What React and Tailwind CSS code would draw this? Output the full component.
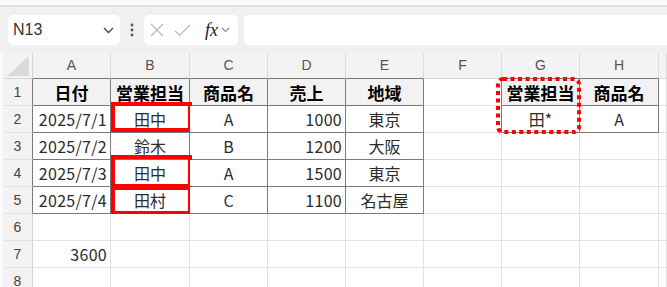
import React from 'react';

// columns: row header + A..H + partial I
const COLS = ['A', 'B', 'C', 'D', 'E', 'F', 'G', 'H', ''];

const ROWS = [
  ['日付', '営業担当', '商品名', '売上', '地域', '', '営業担当', '商品名', ''],
  ['2025/7/1', '田中', 'A', '1000', '東京', '', '田*', 'A', ''],
  ['2025/7/2', '鈴木', 'B', '1200', '大阪', '', '', '', ''],
  ['2025/7/3', '田中', 'A', '1500', '東京', '', '', '', ''],
  ['2025/7/4', '田村', 'C', '1100', '名古屋', '', '', '', ''],
  ['', '', '', '', '', '', '', '', ''],
  ['3600', '', '', '', '', '', '', '', ''],
  ['', '', '', '', '', '', '', '', ''],
];

// right aligned numbers / dates
const RIGHT = new Set(['2025/7/1', '2025/7/2', '2025/7/3', '2025/7/4', '1000', '1200', '1500', '1100', '3600']);

// red highlight frames (row index 1-based, col index 0-based)
const FRAMES = {
  '2-1': 'left-0 -right-[3px] -top-[4px] bottom-0',
  '4-1': 'left-0 -right-[3px] -top-[5px] -bottom-[2px]',
  '5-1': 'left-0 -right-[3px] -top-[1px] -bottom-[2px]',
};

function inTable(r, c) {
  if (r >= 1 && r <= 5 && c >= 0 && c <= 4) return true;
  if (r >= 1 && r <= 2 && (c === 6 || c === 7)) return true;
  return false;
}

function Cell({ r, c, value }) {
  const header = r === 1 && inTable(r, c);
  const darkRight = inTable(r, c) || inTable(r, c + 1);
  const darkBottom = inTable(r, c) || inTable(r + 1, c);
  const right = RIGHT.has(value);
  const frame = FRAMES[`${r}-${c}`];

  return (
    <div
      className={`relative flex items-center h-full border-r border-b px-[3px] leading-none
        ${darkRight ? 'border-r-[#7a7a7a]' : 'border-r-[#e1e1e1]'}
        ${darkBottom ? 'border-b-[#7a7a7a]' : 'border-b-[#e1e1e1]'}
        ${header ? 'bg-[#f2f2f2] font-bold text-black text-[17px]' : 'bg-white text-[#2b2b2b] text-[16px]'}
        ${right ? 'justify-end' : 'justify-center'}`}
    >
      <span className={`whitespace-nowrap ${right ? 'tracking-[0.3px]' : ''}`}>{value}</span>
      {frame && <div className={`absolute ${frame} border-[4px] border-[#ff0000] pointer-events-none`} />}
    </div>
  );
}

export default function App() {
  return (
    <div
      className="w-[667px] h-[287px] overflow-hidden bg-white"
      style={{ fontFamily: '"Noto Sans CJK JP", "Noto Sans", sans-serif' }}
    >
      {/* ribbon edge */}
      <div className="h-[5px] bg-[#fbfbfb]" />

      {/* formula bar */}
      <div className="h-[48px] bg-[#f0f0f0] border-t-2 border-[#e3e3e3] flex items-center pl-[8px] gap-[6px]">
        <div className="w-[112px] h-[30px] bg-white rounded-[5px] flex items-center justify-between pl-[5px] pr-[6px]">
          <span className="text-[16px] text-[#333]" style={{ fontFamily: '"Liberation Sans", sans-serif' }}>N13</span>
          <svg width="11" height="7" viewBox="0 0 11 7">
            <path d="M1 1 L5.5 5.5 L10 1" fill="none" stroke="#444" strokeWidth="1.3" />
          </svg>
        </div>
        <svg width="10" height="14" viewBox="0 0 10 14" className="mx-[1px]">
          <circle cx="5" cy="2" r="1.4" fill="#555" />
          <circle cx="5" cy="7" r="1.4" fill="#555" />
          <circle cx="5" cy="12" r="1.4" fill="#555" />
        </svg>
        <div className="w-[94px] h-[30px] bg-white rounded-[5px] flex items-center pl-[6px] gap-[10px]">
          <svg width="14" height="14" viewBox="0 0 14 14">
            <path d="M1 1 L13 13 M13 1 L1 13" stroke="#b8b8b8" strokeWidth="1.2" />
          </svg>
          <svg width="17" height="13" viewBox="0 0 17 13">
            <path d="M1 7 L5.5 11.5 L16 1" fill="none" stroke="#b8b8b8" strokeWidth="1.2" />
          </svg>
          <div className="flex items-center gap-[3px] ml-[4px]">
            <span className="text-[18px] italic text-[#222] leading-none" style={{ fontFamily: '"Liberation Serif", serif' }}>
              fx
            </span>
            <svg width="9" height="6" viewBox="0 0 9 6">
              <path d="M1 1 L4.5 4.5 L8 1" fill="none" stroke="#888" strokeWidth="1.1" />
            </svg>
          </div>
        </div>
        <div className="flex-1 h-[30px] bg-white rounded-l-[5px]" />
      </div>

      {/* sheet grid */}
      <div className="relative grid grid-cols-[3px_30px_78px_79px_78px_78px_78px_78px_78px_79px_1fr] grid-rows-[26px_repeat(8,27px)]">
        {/* column header row */}
        <div className="bg-[#fafafa]" />
        <div className="relative bg-[#f3f3f3] border-r border-b border-[#d4d4d4]">
          <svg width="22" height="20" viewBox="0 0 22 20" className="absolute right-[3px] bottom-[2px]">
            <polygon points="22,0 22,20 0,20" fill="#dadada" />
          </svg>
        </div>
        {COLS.map((col, c) => (
          <div
            key={`h${c}`}
            className={`flex items-center justify-center bg-[#f3f3f3] border-r border-b text-[14px] text-[#555]
              ${inTable(1, c) ? 'border-b-[#7a7a7a]' : 'border-b-[#d4d4d4]'} border-r-[#dcdcdc]`}
            style={{ fontFamily: '"Liberation Sans", sans-serif' }}
          >
            {col}
          </div>
        ))}

        {ROWS.map((row, i) => {
          const r = i + 1;
          return (
            <React.Fragment key={r}>
              <div className="bg-[#fafafa]" />
              <div
                className={`flex items-center justify-center bg-[#f3f3f3] border-r border-b border-b-[#e1e1e1] text-[14px] text-[#444]
                  ${inTable(r, 0) ? 'border-r-[#7a7a7a]' : 'border-r-[#d4d4d4]'}`}
                style={{ fontFamily: '"Liberation Sans", sans-serif' }}
              >
                {r}
              </div>
              {row.map((v, c) => (
                <Cell key={c} r={r} c={c} value={v} />
              ))}
            </React.Fragment>
          );
        })}

        {/* dotted criteria frame around G1:G2 */}
        <svg width="88" height="60" viewBox="0 0 88 60" className="absolute left-[495px] top-[23px] pointer-events-none">
          <rect
            x="3"
            y="3"
            width="81"
            height="53"
            rx="5"
            fill="none"
            stroke="#ff0000"
            strokeWidth="4"
            strokeDasharray="4 3.5"
          />
        </svg>
      </div>
    </div>
  );
}
